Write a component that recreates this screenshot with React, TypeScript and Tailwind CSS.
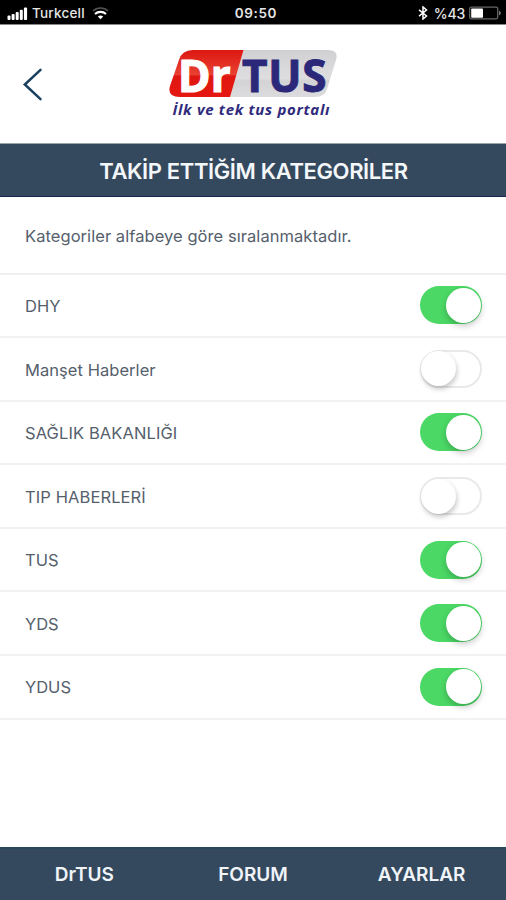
import React, { useState, FC } from 'react';

interface Category {
  id: string;
  name: string;
  followed: boolean;
  tracking: string;
}

const initialCategories: Category[] = [
  { id: 'dhy', name: 'DHY', followed: true, tracking: 'tracking-normal' },
  { id: 'manset', name: 'Manşet Haberler', followed: false, tracking: 'tracking-[0.05px]' },
  { id: 'saglik', name: 'SAĞLIK BAKANLIĞI', followed: true, tracking: 'tracking-[0.1px]' },
  { id: 'tip', name: 'TIP HABERLERİ', followed: false, tracking: 'tracking-[0.1px]' },
  { id: 'tus', name: 'TUS', followed: true, tracking: 'tracking-normal' },
  { id: 'yds', name: 'YDS', followed: true, tracking: 'tracking-normal' },
  { id: 'ydus', name: 'YDUS', followed: true, tracking: 'tracking-normal' },
];

const StatusBar: FC = () => (
  <div className="grid h-[25px] shrink-0 grid-cols-3 items-center border-b border-[#8c8788] bg-black text-[13.5px] leading-none text-[#e6e6e6]">
    <div className="flex items-center pt-[3px] pl-[7px]">
      <svg width="21" height="14" viewBox="0 0 21 14" fill="#fff">
        <rect x="0.5" y="8.5" width="3" height="4.5" rx="1" />
        <rect x="4.6" y="7" width="3" height="6" rx="1" />
        <rect x="8.7" y="5" width="3" height="8" rx="1" />
        <rect x="12.8" y="2.7" width="3" height="10.3" rx="1" />
        <rect x="16.9" y="0.5" width="3.2" height="12.5" rx="1" />
      </svg>
      <span className="ml-[4px] font-medium tracking-[0.2px]">Turkcell</span>
      <svg className="ml-[7px]" width="17" height="13" viewBox="0 0 17 13" fill="none" stroke="#fff" strokeWidth="2.1">
        <path d="M1 3.9C5 0 12 0 16 3.9" stroke="#555" strokeWidth="1.4" />
        <path d="M3 7C6 4.2 11 4.2 14 7" />
        <path d="M5.8 9.6 8.5 12.3 11.2 9.6C9.6 8.2 7.4 8.2 5.8 9.6Z" fill="#fff" stroke="none" />
      </svg>
    </div>
    <div className="pt-[4px] pl-[6px] text-center font-semibold tracking-[0.6px]">09:50</div>
    <div className="flex items-center justify-end pt-[2px] pr-[4px]">
      <svg width="10" height="14" viewBox="0 0 10 14" fill="none" stroke="#fff" strokeWidth="1.5">
        <path d="M1 3.8 8.5 10 5 13V1l3.5 3L1 10.2" />
      </svg>
      <span className="ml-[6px] pt-[2px] text-[14px] font-medium tracking-[-0.2px]">%43</span>
      <svg className="ml-[4px]" width="33" height="14" viewBox="0 0 33 14">
        <rect x="0.7" y="1.2" width="28" height="11.6" rx="1.5" fill="none" stroke="#666" strokeWidth="1.3" />
        <rect x="2.2" y="2.5" width="11.8" height="9.2" rx="0.8" fill="#fff" />
        <path d="M30 4.7C32.4 5.5 32.4 8.5 30 9.3Z" fill="#777" />
      </svg>
    </div>
  </div>
);

const Badge: FC = () => (
  <svg className="absolute top-0 left-0" width="170" height="47" viewBox="0 0 170 47">
    <defs>
      <clipPath id="badge">
        <path d="M25 0H160Q171 0 168 10L159 39Q157 47 147 47H12Q-1 47 2 36L11 10Q14 0 25 0Z" />
      </clipPath>
      <linearGradient id="red" x1="0" y1="0" x2="0" y2="1">
        <stop offset="0" stopColor="#dc1712" />
        <stop offset="0.52" stopColor="#e94132" />
        <stop offset="0.56" stopColor="#df1710" />
        <stop offset="1" stopColor="#e51811" />
      </linearGradient>
      <linearGradient id="silver" x1="0" y1="0" x2="0" y2="1">
        <stop offset="0" stopColor="#d0d0d3" />
        <stop offset="0.6" stopColor="#dedee0" />
        <stop offset="0.66" stopColor="#d3d3d6" />
        <stop offset="1" stopColor="#dcdcde" />
      </linearGradient>
    </defs>
    <g clipPath="url(#badge)">
      <rect width="180" height="47" fill="url(#silver)" />
      <path d="M0 0H75.5L62 47H0Z" fill="url(#red)" />
    </g>
  </svg>
);

const Logo: FC = () => (
  <div className="relative ml-[10px] h-[78px] w-[180px] font-['Open_Sans','Noto_Sans',sans-serif]">
    <Badge />
    <div className="relative flex h-[47px] items-center pt-[3px] text-[44px] leading-[44px] font-bold">
      <span className="ml-[10px] w-[62px] tracking-[0.3px] text-white [-webkit-text-stroke:1.2px_#fff]">Dr</span>
      <span className="ml-[2px] tracking-[0.8px] text-[#2c2879] [-webkit-text-stroke:1px_#2c2879]">TUS</span>
    </div>
    <p className="relative mt-[3px] ml-[4.5px] text-[15px] leading-[18px] font-bold tracking-[0.68px] whitespace-nowrap text-[#302b7c] italic">İlk ve tek tus portalı</p>
  </div>
);

const Header: FC = () => (
  <header className="relative flex h-[118px] shrink-0 justify-center bg-white pt-[25px]">
    <button aria-label="Geri" className="absolute top-[43px] left-[21px]">
      <svg width="24" height="34" viewBox="0 0 24 34" fill="none" stroke="#19405f" strokeWidth="2.5" strokeLinecap="round">
        <path d="M19.5 1.8 3.8 16.5 19.5 31.2" />
      </svg>
    </button>
    <Logo />
  </header>
);

interface ToggleProps {
  label: string;
  checked: boolean;
  onChange: () => void;
}

const Toggle: FC<ToggleProps> = ({ label, checked, onChange }) => (
  <button
    role="switch"
    aria-label={label}
    aria-checked={checked}
    onClick={onChange}
    className={`flex h-[38px] w-[62px] items-center rounded-full ${checked ? 'justify-end bg-[#4bd865] pr-px' : 'justify-start border-2 border-[#e9e9e9] bg-white'}`}
  >
    <span className={`size-[35px] shrink-0 rounded-full bg-white ${checked ? 'shadow-[0_3px_6px_rgba(0,0,0,0.22)]' : '-ml-px shadow-[1px_3px_5px_rgba(0,0,0,0.22)]'}`} />
  </button>
);

const App: FC = () => {
  const [categories, setCategories] = useState(initialCategories);

  const toggleCategory = (id: string) => {
    setCategories(prev => prev.map(c => (c.id === id ? { ...c, followed: !c.followed } : c)));
  };

  return (
    <div className="flex h-[900px] w-[506px] flex-col overflow-hidden bg-white font-['Inter',sans-serif]">
      <StatusBar />
      <Header />
      <h1 className="flex h-[54px] shrink-0 items-center justify-center border-t border-b border-t-[#9aa3a8] border-b-[#16234a] bg-[#34495e] pt-[3px] pl-px text-[22px] font-semibold tracking-[-0.38px] text-[#f4f7fa]">
        TAKİP ETTİĞİM KATEGORİLER
      </h1>
      <p className="flex h-[77.5px] shrink-0 items-center border-b-2 border-[#efeff0] pt-[3px] pl-[25px] text-[16.5px] tracking-[0.06px] text-[#55606c]">
        Kategoriler alfabeye göre sıralanmaktadır.
      </p>
      <ul>
        {categories.map(category => (
          <li key={category.id} className="flex h-[63.6px] items-center justify-between border-b-2 border-[#f2f2f3] pr-6 pl-[25px]">
            <span className={`pt-[2px] text-[16.5px] text-[#55606c] ${category.tracking}`}>{category.name}</span>
            <Toggle label={category.name} checked={category.followed} onChange={() => toggleCategory(category.id)} />
          </li>
        ))}
      </ul>
      <nav className="mt-auto grid h-[53px] shrink-0 grid-cols-3 items-center border-t-2 border-[#28485a] bg-[#34495e] pt-[2px] text-center text-[19px] font-semibold text-[#f0f4f8]">
        <a>DrTUS</a>
        <a>FORUM</a>
        <a>AYARLAR</a>
      </nav>
    </div>
  );
};

export default App;
